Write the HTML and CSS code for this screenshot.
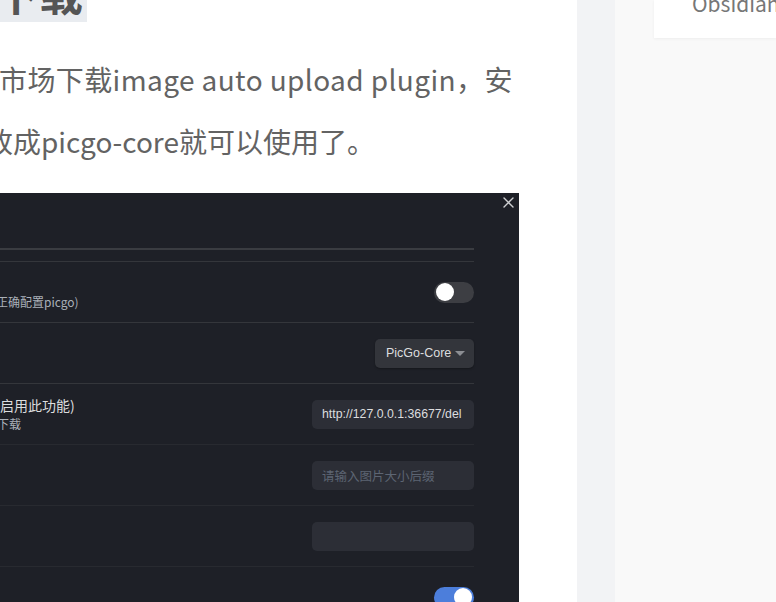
FILE: index.html
```html
<!DOCTYPE html>
<html lang="zh-CN">
<head>
<meta charset="utf-8">
<title>image auto upload plugin</title>
<link rel="stylesheet" href="styles.css">
</head>
<body>
<div class="page">
  <main class="main">
    <h2 class="heading"><span class="mark">下载</span></h2>
    <p class="para">
      <span class="line line-1">市场下载image auto upload plugin，安</span>
      <span class="line line-2">改成picgo-core就可以使用了。</span>
    </p>
    <div class="shot">
      <span class="shot-close">
        <svg width="11" height="11" viewBox="0 0 11 11"><path d="M1 1L10 10M10 1L1 10" stroke="#cfd0d3" stroke-width="1.4" stroke-linecap="round"/></svg>
      </span>
      <div class="settings">
        <div class="settings-head"></div>
        <div class="item">
          <div class="label">
            <div class="name"></div>
            <div class="desc desc-1">正确配置picgo)</div>
          </div>
          <div class="toggle"><span class="knob"></span></div>
        </div>
        <div class="item">
          <div class="label"></div>
          <div class="dropdown"><span class="dropdown-text">PicGo-Core</span><span class="caret"></span></div>
        </div>
        <div class="item">
          <div class="label">
            <div class="name name-3">启用此功能)</div>
            <div class="desc desc-3">下载</div>
          </div>
          <div class="field"><span class="field-text">http://127.0.0.1:36677/del</span></div>
        </div>
        <div class="item item-faint">
          <div class="label"></div>
          <div class="field"><span class="field-text placeholder">请输入图片大小后缀</span></div>
        </div>
        <div class="item item-faint">
          <div class="label"></div>
          <div class="field"><span class="field-text"></span></div>
        </div>
        <div class="item item-faint">
          <div class="label"></div>
          <div class="toggle toggle-on"><span class="knob"></span></div>
        </div>
      </div>
    </div>
  </main>
  <div class="gutter"></div>
  <aside class="aside">
    <div class="card"><div class="card-title">Obsidian</div></div>
  </aside>
</div>
</body>
</html>
```

FILE: styles.css
```css
html, body {
  margin: 0;
  padding: 0;
  background: #f9f9f9;
}
.page {
  display: flex;
  height: 602px;
  overflow: hidden;
  font-family: "Noto Sans CJK SC", "Noto Sans", sans-serif;
}
.main {
  width: 577px;
  flex: none;
  background: #ffffff;
  overflow: hidden;
}
.gutter {
  width: 38px;
  flex: none;
  background: #f2f3f5;
}
.aside {
  flex: 1;
  background: #f9f9f9;
  padding-left: 39px;
  overflow: hidden;
}
.card {
  display: flow-root;
  height: 38px;
  background: #ffffff;
  box-shadow: 0 1px 3px rgba(0, 0, 0, 0.05);
  overflow: hidden;
}
.card-title {
  margin: -9px 0 0 38px;
  font-size: 21px;
  line-height: 24px;
  color: #777777;
  white-space: nowrap;
}

.heading {
  margin: -37px 0 0 -5px;
  font-size: 44px;
  font-weight: 700;
  line-height: 59px;
  color: #555555;
}
.mark {
  display: inline-block;
  height: 59px;
  padding: 0 4px 0 0;
  background: #e9ecf0;
}
.para {
  margin: 26px 0 0 0;
  font-size: 28px;
  line-height: 62px;
  color: #636363;
  white-space: nowrap;
}
.line {
  display: block;
}
.line-1 {
  margin-left: -1px;
  letter-spacing: 0.4px;
}
.line-2 { margin-left: -15px; }

.shot {
  position: relative;
  width: 519px;
  height: 409px;
  margin-top: 21px;
  background: #1e2027;
  overflow: hidden;
  font-family: "Noto Sans CJK SC", sans-serif;
  color: #dcdddf;
}
.shot-close {
  position: absolute;
  top: 4px;
  right: 5px;
  display: block;
  width: 11px;
  height: 11px;
}
.shot-close svg { display: block; }
.settings {
  width: 474px;
  padding-top: 55px;
}
.settings-head {
  height: 2px;
  background: #3a3c41;
  margin-bottom: 11px;
}
.item {
  display: flex;
  align-items: center;
  justify-content: space-between;
  height: 60px;
  border-top: 1px solid #34363b;
}
.item-faint {
  border-top-color: #282a30;
}
.label {
  display: flex;
  flex-direction: column;
  white-space: nowrap;
}
.name {
  min-height: 19px;
  font-size: 14px;
  line-height: 19px;
  color: #dcdddf;
}
.desc {
  font-size: 12px;
  line-height: 17px;
  color: #aab0b9;
}
.desc-1 { margin-left: -4px; }
.name-3 { margin-left: 0; }
.desc-3 { margin-left: -3px; }

.toggle {
  display: flex;
  align-items: center;
  justify-content: flex-start;
  box-sizing: border-box;
  width: 40px;
  height: 21px;
  padding: 0 2px;
  border-radius: 11px;
  background: #3d3e43;
}
.toggle-on {
  justify-content: flex-end;
  background: #4c7edb;
}
.knob {
  width: 18px;
  height: 18px;
  border-radius: 50%;
  background: #ffffff;
}
.dropdown {
  display: flex;
  align-items: center;
  box-sizing: border-box;
  width: 99px;
  height: 29px;
  padding: 0 9px 0 11px;
  border-radius: 5px;
  background: #33353b;
  font-family: "Liberation Sans", "Noto Sans", sans-serif;
  font-size: 12.5px;
  color: #dcdddf;
  white-space: nowrap;
  box-shadow: 0 1px 2px rgba(0, 0, 0, 0.3);
}
.dropdown-text {
  flex: none;
}
.caret {
  flex: none;
  width: 0;
  height: 0;
  border-left: 5px solid transparent;
  border-right: 5px solid transparent;
  border-top: 5px solid #8c8e93;
  margin-left: auto;
}
.field {
  display: flex;
  align-items: center;
  box-sizing: border-box;
  width: 162px;
  height: 29px;
  padding: 0 8px 0 10px;
  border-radius: 5px;
  background: #2c2e36;
  font-family: "Liberation Sans", "Noto Sans", sans-serif;
  font-size: 12.3px;
}
.field-text {
  display: block;
  flex: 1;
  min-width: 0;
  overflow: hidden;
  white-space: nowrap;
  color: #dcdddf;
}
.placeholder {
  color: #5d6573;
  font-family: "Noto Sans CJK SC", sans-serif;
  font-size: 12.5px;
}
```
